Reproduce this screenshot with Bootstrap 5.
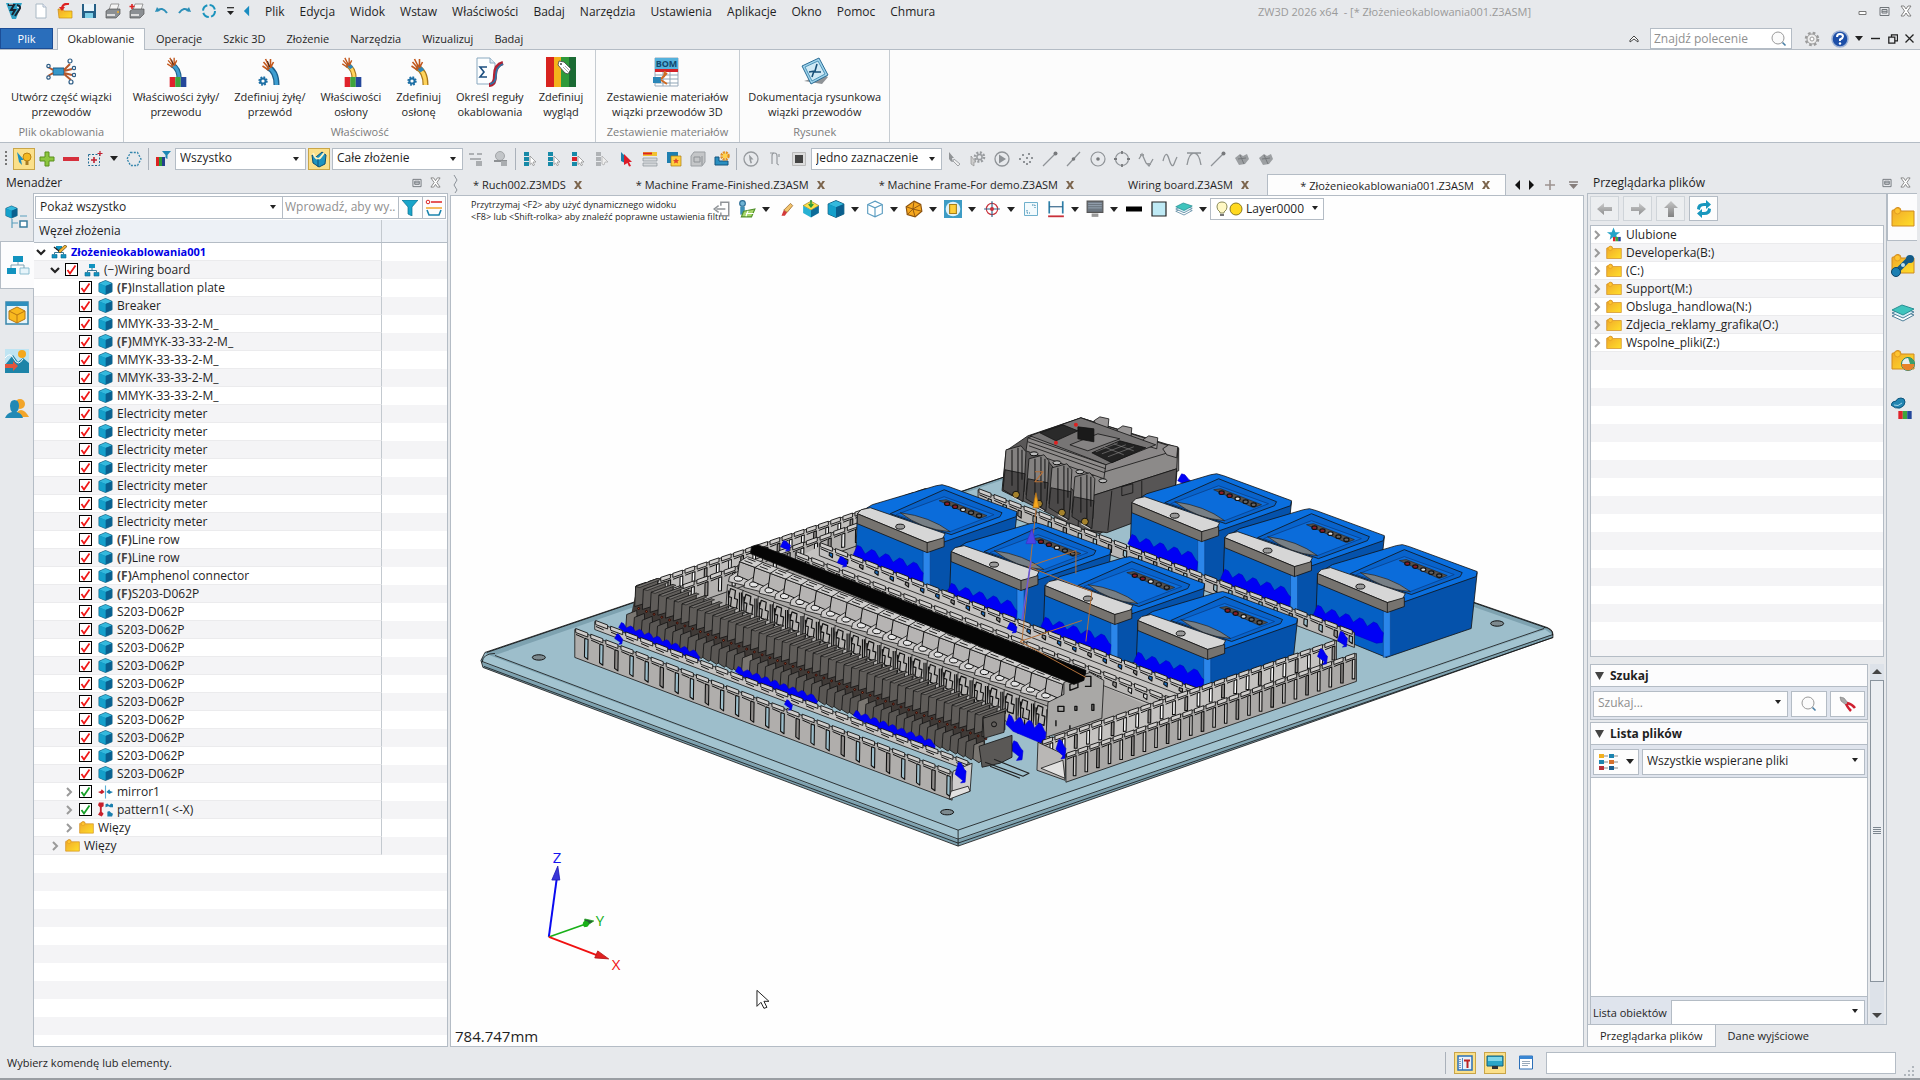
<!DOCTYPE html>
<html lang="pl">
<head>
<meta charset="utf-8">
<meta name="viewport" content="width=device-width, initial-scale=1">
<title>ZW3D 2026 x64 - [* Złożenieokablowania001.Z3ASM]</title>
<link href="https://cdn.jsdelivr.net/npm/bootstrap@5.3.0/dist/css/bootstrap.min.css" rel="stylesheet">
<style>
:root{--app:#e7e9ec;--line:#b4bcc5;--ink:#1f1f1f}
body{background:var(--app);color:var(--ink);font:11px/15px "Open Sans","Noto Sans",sans-serif;overflow:hidden}
a{color:inherit;text-decoration:none}
svg{display:block;flex:none}
button{font:inherit;color:inherit}
.tool{border:0;background:none;padding:0;display:flex;align-items:center;justify-content:center;flex:none}
.w25{width:25px}.w24{width:24px}.w22{width:22px}.w18{width:18px}.w14{width:14px}
.hot{background:#fbe08a;border:1px solid #c9a548;width:22px;height:22px}
.gap-hot{margin:0 2px}
.ic16{width:16px;height:16px}.ic18{width:18px;height:18px}.ic24{width:24px;height:24px}.ic30{width:30px;height:30px}
.vbar{width:1px;height:22px;background:#aab1ba;flex:none;margin:0 2px}
.titlebar{height:28px;padding:0 3px 6px 3px}
.menus{font-size:12px}
.menus a{padding:0 7px 0 8px}
.caption-txt{color:#9a9a9a;margin-right:320px}
.tabstrip{height:21px}
.tabstrip a{padding:3px 10px 0 11px}
.tabstrip .filetab{background:#2a6ebb;border:1px solid #1c4d96;color:#fff;width:53px;text-align:center;padding:2px 0 0}
.tabstrip .cur{background:#fdfdfd;border:1px solid var(--line);border-bottom:0;margin:0 0 -1px 4px;width:88px;text-align:center;position:relative;padding:2px 0 0;z-index:1}
.findbox{width:142px;height:21px;background:#fff;border:1px solid var(--line)}
.findbox input{border:0;background:none;width:112px;font-size:12px;padding:0 3px;color:var(--ink)}
input::placeholder{color:#8f8f8f!important;opacity:1}
.ribbon{height:94px;background:#fcfcfc;border-top:1px solid var(--line);border-bottom:1px solid var(--line)}
.rgroup{border-right:1px solid #c6ccd2;padding:7px 11px 0}
.rgroup.props{width:472px;padding:7px 8px 0 9px}
.rgroup.props .d-flex{gap:15px}
.rgroup .big{border:0;background:none;padding:0;text-align:center;white-space:nowrap}
.rgroup .big svg{margin:0 auto 2px}
.rgroup .cap{color:#7b7b7b;text-align:center;margin-top:5px}
.quick{height:31px;padding-left:3px}
.pick{appearance:none;border:1px solid var(--line);border-radius:0;height:22px;font-size:12px;line-height:15px;padding:0 16px 2px 4px;color:var(--ink);background:#fff url("data:image/svg+xml,%3csvg xmlns='http://www.w3.org/2000/svg' viewBox='0 0 6 4'%3e%3cpath d='M0 0h6L3 4z' fill='%23222'/%3e%3c/svg%3e") no-repeat right 6px top 8px/6px 4px;flex:none}
.pick.q{width:131px}
.sidehead{height:19px;padding:0 6px 2px 6px;font-size:12px}
.leftcol{width:450px}
.rail{width:33px}
.rail button{width:33px;height:48px;border:1px solid transparent;border-right:0;background:none;padding:0;display:flex;align-items:center;justify-content:center}
.rail .on{background:#fcfcfd;border-color:var(--line);margin-right:-1px;width:34px;position:relative}
.rail.right button{width:30px}
.panel-l{border:1px solid var(--line);margin-right:2px}
.filterrow{height:26px;padding:2px 1px 0}
.filterrow .pick{width:248px;height:23px}
.filterrow input{width:116px;height:23px;font-size:12px;border:1px solid var(--line);border-left:0;padding:0 2px 2px}
.sq{width:24px;height:23px;border:1px solid var(--line);border-left:0;background:#fdfdfd;padding:0;display:flex;align-items:center;justify-content:center}
.colhead{height:23px;background:#edf1f6;border-bottom:1px solid var(--line);font-size:12px;line-height:21px}
.colhead span{width:348px;border-right:1px solid #c3c9cf;padding-left:5px}
.stripes{background:repeating-linear-gradient(#fff 0 18px,#f4f4f6 18px 36px);font-size:12px;line-height:17px}
.trow{height:18px;width:348px;border-right:1px solid #c3c9cf;border-bottom:1px solid #ebebed;white-space:nowrap}
.trow label{cursor:default}
.chev{width:10px;height:10px;margin-right:5px}
.d1{padding-left:2px}.d2{padding-left:16px}.d3{padding-left:30px}.d4{padding-left:45px}
.tick{appearance:none;width:13px;height:13px;border:1px solid #000;background:#fff no-repeat center/11px 11px;margin:0 6px 0 0;flex:none}
.tick.red{background-image:url("data:image/svg+xml,%3csvg xmlns='http://www.w3.org/2000/svg' viewBox='0 0 11 11'%3e%3cpath d='M1.5 6L4 9.5 9.5 1.5' fill='none' stroke='%23f01818' stroke-width='1.8'/%3e%3c/svg%3e")}
.tick.green{background-image:url("data:image/svg+xml,%3csvg xmlns='http://www.w3.org/2000/svg' viewBox='0 0 11 11'%3e%3cpath d='M1.5 6L4 9.5 9.5 1.5' fill='none' stroke='%2318a028' stroke-width='1.8'/%3e%3c/svg%3e")}
.root-name{color:#0000e6;font-weight:700;font-size:11px}
.fixmark{font-weight:700;color:#444}
.doctabs{height:21px;padding-left:2px}
.doctabs .dt{padding:0 14px 0 39px;gap:7px;flex:none}
.doctabs .dt.first{padding-left:13px}
.doctabs .dt.on{background:#fdfdfd;border:1px solid var(--line);border-bottom:0;padding-left:32px}
.view{border:1px solid var(--line);background:#fefefe}
.hints{left:20px;top:3px;font-size:9px;line-height:12px}
.viewtools{left:258px;top:2px}
.layerbox{border:1px solid var(--line);width:114px;height:22px;background:#fff}
.layerbox .pick{border:0;width:80px;height:20px;padding-left:3px;padding-right:12px;background-position:right 5px top 7px}
.dist{left:4px;bottom:0;font-size:15px;line-height:20px}
.rightcol{width:336px;padding-left:3px}
.rp{border:1px solid var(--line);width:301px;padding:2px 2px 0}
.rp .nav4{gap:4px;height:26px}
.rp .nav4 button{width:29px;height:25px;border:1px solid #cfd4d9;background:#eceef0;display:flex;align-items:center;justify-content:center;padding:0}
.rp .nav4 .go{background:#fdfdfd;border-color:var(--line)}
.fbox{border:1px solid var(--line);height:432px;margin-top:3px;margin-bottom:7px;font-size:12px}
.fbox .trow{width:auto;border-right:0;padding-left:1px}
.fbox .chev{margin-right:4px}
.sec{border:1px solid var(--line);background:#dfe4ed}
.sec.upper{margin-bottom:2px}
.sec.lower{border-bottom:0}
.sech{height:22px;background:#fcfcfd;border-bottom:1px solid var(--line);font-weight:700;font-size:12px;line-height:21px;padding-left:4px;gap:6px}
.sec .line2{height:32px;padding:1px 2px 0;gap:3px}
.sec .ctl{height:26px;border:1px solid var(--line);background-color:#fdfdfd}
.muted-pick{color:#8f8f8f}
.objrow{padding:3px 2px 0;font-size:12px}
.objrow label{font-size:11px}
.objrow .pick{height:24px;border-bottom:0}
.filelist{background:#fefefe;border-top:1px solid var(--line);border-bottom:1px solid var(--line)}
.sbar{width:14px;background:#dde2e9;margin-left:2px}
.thumb{border:1px solid #8a949e;background:#ebeef2}
.bottabs{height:22px}
.bottabs a{padding:3px 12px}
.bottabs .on{background:#fdfdfd;border:1px solid var(--line);border-top:0}
.status{height:33px;padding-left:7px;border-bottom:2px solid #9a9ea3}
.status input{width:350px;height:22px;border:1px solid var(--line);background:#fff}
.fit{min-width:0;min-height:0}
</style>
</head>
<body class="vh-100 d-flex flex-column">

<svg width="0" height="0" class="position-absolute" aria-hidden="true">
<defs>
<linearGradient id="gy" x1="0" y1="0" x2="1" y2="1"><stop offset="0" stop-color="#f0a52a"/><stop offset="1" stop-color="#ffdf2a"/></linearGradient>
<linearGradient id="gg" x1="0" y1="0" x2="0" y2="1"><stop offset="0" stop-color="#bbb"/><stop offset="1" stop-color="#666"/></linearGradient>
<symbol id="cube" viewBox="0 0 16 16"><path d="M8 0.5l7 3v9l-7 3-7-3v-9z" fill="#0d86b5" stroke="#0a5678" stroke-width=".8"/><path d="M8 .8l6.600 2.800L8 6.500 1.400 3.600z" fill="#35b9dd"/><path d="M8 6.500l6.700-2.800v8.600L8 15.300z" fill="#0b5f8e"/><path d="M1.300 3.700L8 6.500v8.800l-6.700-2.900z" fill="#14a0cb"/></symbol>
<symbol id="cubeo" viewBox="0 0 16 16"><path d="M8 1l6.500 3v8L8 15l-6.500-3V4zM1.500 4L8 7l6.500-3M8 7v8" fill="#fff" stroke="#5a9cc0"/></symbol>
<symbol id="cubey" viewBox="0 0 16 16"><path d="M8 1l7 4-7 4-7-4z" fill="#ffe14a" stroke="#9a7a10" stroke-width=".6"/><path d="M1 5l7 4v6.500l-7-4z" fill="#27b1d3"/><path d="M15 5L8 9v6.500l7-4z" fill="#0d6c99"/><path d="M8 0v5M6 3.500l2 2.500 2-2.500" stroke="#2f9c39" fill="none" stroke-width="1.400"/></symbol>
<symbol id="fold" viewBox="0 0 24 20"><path d="M1 4q0-1 1-1h1q1-2.500 4-2.500T10 4h13v15H1z" fill="url(#gy)" stroke="#cf8a1e"/><circle cx="6.500" cy="4" r="3" fill="#ffc531" stroke="#d9901c" stroke-width=".7"/></symbol>
<symbol id="org" viewBox="0 0 16 14"><path d="M5 1h6v4H5z" fill="#1293bf"/><path d="M1 9.500h5V13H1zM10 9.500h5V13h-5z" fill="#1293bf" stroke="#0b6a90" stroke-width=".6"/><path d="M8 5v2.500M3.500 9.500v-2h9v2" fill="none" stroke="#3a7a98"/></symbol>
<symbol id="orgl" viewBox="0 0 24 22"><path d="M7 2h10v6H7z" fill="#1293bf"/><path d="M1 14h9v6H1z" fill="#1293bf"/><path d="M14 14h9v6h-9z" fill="#e6f4fa" stroke="#8bbdd0"/><path d="M12 8v3M5 14v-3h13v3" fill="none" stroke="#7ca2b3"/></symbol>
<symbol id="orge" viewBox="0 0 16 14"><use href="#org"/><path d="M7 6l7-6 2 1.500L9 8z" fill="#f2b233" stroke="#5a4010" stroke-width=".7"/><path d="M3 2l5 4" stroke="#222" stroke-width="1.500"/></symbol>
<symbol id="cr" viewBox="0 0 10 10"><path d="M3 1l4 4-4 4" fill="none" stroke="#9a9a9a" stroke-width="2"/></symbol>
<symbol id="cd" viewBox="0 0 10 10"><path d="M1 3l4 4 4-4" fill="none" stroke="#222" stroke-width="2.200"/></symbol>
<symbol id="dn" viewBox="0 0 8 5"><path d="M0 0h8L4 5z" fill="#222"/></symbol>
<symbol id="mir" viewBox="0 0 16 14"><path d="M8 0v14" stroke="#5bb0d6" stroke-width="1.200"/><path d="M0 7l3-1 1-2 3 3-3 2z" fill="#c7202c"/><path d="M16 7l-3-1-1-2-3 3 3 2z" fill="#1a7fae"/></symbol>
<symbol id="pat" viewBox="0 0 16 15"><path d="M1 0h5v4l-2 1v5l2 2-2 3-4-2 2-3V5L0 3z" fill="#c7202c"/><path d="M8 2l2-1 2 2 2-2 2 1v3h-3L11 4 8 5zM10 10l2-1 2 2 2 1-1 3h-5z" fill="#1a7fae"/></symbol>
<symbol id="pin" viewBox="0 0 11 11"><path d="M1 1.500h9v8H1zM3 3.500h5v3.500H3zM3 5.300h5" fill="none" stroke="#70757a"/></symbol>
<symbol id="cls" viewBox="0 0 12 12"><path d="M1 1h3l2 3 2-3h3L7.500 6 11 11H8L6 8l-2 3H1l3.500-5z" fill="#fff" stroke="#777" stroke-width=".9"/></symbol>
<symbol id="x" viewBox="0 0 10 10"><path d="M1 1h2.500L5 3.500 6.500 1H9L6.300 5 9 9H6.500L5 6.500 3.500 9H1l2.700-4z" fill="#7b644c"/></symbol>
<symbol id="mag" viewBox="0 0 16 16"><circle cx="7" cy="7" r="6" fill="#fbfbfb" stroke="#9a9a9a"/><path d="M11.500 11.500l3 3" stroke="#4a7fa5" stroke-width="1.600"/></symbol>
<symbol id="gear" viewBox="0 0 16 16"><circle cx="8" cy="8" r="6" fill="none" stroke="#9b9b9b" stroke-width="2.600" stroke-dasharray="2.600 2.110"/><circle cx="8" cy="8" r="5" fill="#eee" stroke="#9b9b9b"/><circle cx="8" cy="8" r="2" fill="#fff" stroke="#9b9b9b"/></symbol>
<symbol id="gearb" viewBox="0 0 10 10"><circle cx="5" cy="5" r="3.600" fill="none" stroke="#1d6fa5" stroke-width="2.200" stroke-dasharray="1.600 1.230"/><circle cx="5" cy="5" r="2.600" fill="none" stroke="#1d6fa5" stroke-width="2"/></symbol>
<symbol id="rgb" viewBox="0 0 15 9"><path d="M0 0h5v9H0z" fill="#e0232b"/><path d="M5 0h5v9H5z" fill="#3fa53c"/><path d="M10 0h5v9h-5z" fill="#24479b"/></symbol>
<symbol id="wire" viewBox="0 0 18 28"><path d="M5 9Q14 13 14 27" fill="none" stroke="#1c5f8c" stroke-width="6"/><path d="M5 9Q14 13 14 27" fill="none" stroke="#3f9ed0" stroke-width="3.500"/><path d="M7 11L1 4M7 9L3 1M8 9L8 1M6 12L0 8M8 10L11 4" stroke="#c2571c" stroke-width="1.600"/><path d="M7 9L5 3" stroke="#3a2015"/></symbol>
<symbol id="wirey" viewBox="0 0 18 28"><path d="M5 9Q14 13 14 27" fill="none" stroke="#a9781c" stroke-width="6"/><path d="M5 9Q14 13 14 27" fill="none" stroke="#ffd45c" stroke-width="3.500"/><path d="M5 9q4 1 6 4" fill="none" stroke="#2d86b8" stroke-width="4.500"/><path d="M7 11L1 4M7 9L3 1M8 9L8 1M6 12L0 8M8 10L11 4" stroke="#c2571c" stroke-width="1.600"/></symbol>
<symbol id="r1" viewBox="0 0 30 30"><path d="M7 11h11v7H7z" fill="#3597c9" stroke="#1b5b86"/><path d="M7 13l-5-3M7 16l-5 3M18 13l6-6M18 14l8-2M18 16l8 2M18 17l7 6" stroke="#b5582c" stroke-width="2"/><g fill="#fff" stroke="#2e5d86" stroke-width="1.200"><circle cx="2.500" cy="9" r="1.700"/><circle cx="2.500" cy="20.500" r="1.700"/><circle cx="24" cy="4" r="2"/><circle cx="28" cy="11" r="1.700"/><circle cx="28" cy="18" r="1.700"/><circle cx="25" cy="25" r="2"/></g></symbol>
<symbol id="r2" viewBox="0 0 30 30"><use href="#wire" x="5" y="0" width="18" height="24"/><path d="M8 20h18v10H8z" fill="#fcfcfc"/><use href="#rgb" x="8" y="20" width="18" height="10"/></symbol>
<symbol id="r3" viewBox="0 0 30 30"><use href="#wire" x="7" y="1" width="19" height="28"/><use href="#gearb" x="3" y="19" width="10" height="10"/></symbol>
<symbol id="r4" viewBox="0 0 30 30"><use href="#wirey" x="5" y="0" width="18" height="24"/><path d="M8 20h18v10H8z" fill="#fcfcfc"/><use href="#rgb" x="8" y="20" width="18" height="10"/></symbol>
<symbol id="r5" viewBox="0 0 30 30"><use href="#wirey" x="7" y="1" width="19" height="28"/><use href="#gearb" x="3" y="19" width="10" height="10"/></symbol>
<symbol id="r6" viewBox="0 0 30 30"><path d="M2 1h13l5 5v21H2z" fill="#fdfeff" stroke="#8aa9c0"/><path d="M15 1v5h5" fill="#dce8f2" stroke="#8aa9c0"/><path d="M12 10H5l4 5-4 5h7" fill="none" stroke="#1d4f80" stroke-width="1.600"/><path d="M14 28q6 0 6-10t8-12" fill="none" stroke="#b22233" stroke-width="4"/><path d="M15 27q6-1 6-9t7-11" fill="none" stroke="#2c76a8" stroke-width="1.800"/></symbol>
<symbol id="r7" viewBox="0 0 30 30"><path d="M0 0h8v30H0z" fill="#d8231f"/><path d="M8 0h7v30H8z" fill="#f4b21c"/><path d="M15 0h8v30h-8z" fill="#2f9a3a"/><path d="M23 0h7v30h-7z" fill="#1b6b34"/><path d="M13 4l5 1 7 7-3 5-3-1-7-8z" fill="#fff" stroke="#444" stroke-width=".8"/><circle cx="15" cy="7" r="1" fill="#444"/><path d="M17 10l5 5M19 9l4 4" stroke="#888" stroke-width=".7"/></symbol>
<symbol id="r8" viewBox="0 0 30 30"><path d="M3 1h23v28H3z" fill="#fff" stroke="#9ab"/><path d="M3 1h23v11H3z" fill="#54b1dc"/><text x="14.500" y="10" text-anchor="middle" font-family="Open Sans, sans-serif" font-size="9" font-weight="700" fill="#11486e">BOM</text><path d="M3 12h23v3H3z" fill="#d4232a"/><path d="M3 18h23M3 22h23M3 26h23M11 15v14M18 15v14" stroke="#8fa5b6"/><path d="M1 20h8v6H1z" fill="#2a86b8"/><path d="M9 22l6-6M9 23l6 4M12 20l1-6" stroke="#d06a24" stroke-width="2"/></symbol>
<symbol id="r9" viewBox="0 0 30 30"><path d="M4 24l18 3 6-7-4-2z" fill="#8f9397"/><path d="M2 9l17-8 9 17-17 9z" fill="#9fd4ec" stroke="#2a6c95"/><path d="M5 10l13-6 7 13-13 7z" fill="#cfe9f5" stroke="#4d93b8"/><path d="M9 15l6-1 2-7M14 14l-2 6M14 15l7 0" stroke="#174f78" stroke-width="1.600" fill="none"/></symbol>
<symbol id="sel" viewBox="0 0 16 16"><path d="M2 1h5v4H2zM2 6h5v4H2zM2 11h5v4H2z" fill="#178aa8"/><path d="M8 5l6 6-3 0 1.500 3-1.500.6L9.700 12 8 13.500z" fill="#fff" stroke="#888" stroke-width=".7"/></symbol>
<symbol id="selr" viewBox="0 0 16 16"><use href="#sel"/><path d="M2 6h5v4H2z" fill="#d8232b"/></symbol>
<symbol id="selg" viewBox="0 0 16 16"><path d="M2 1h5v4H2zM2 6h5v4H2zM2 11h5v4H2z" fill="#b0b3b6"/><path d="M8 5l6 6-3 0-1 3-2-1z" fill="#eee" stroke="#aaa" stroke-width=".7"/></symbol>
<symbol id="arr2" viewBox="0 0 16 16"><path d="M3 1l6 6-3 1 1 4-4-2z" fill="#1b7fa8"/><path d="M6 3l8 8H11l2 4-2 .6L9.500 12 6 14z" fill="#dd1d28"/></symbol>
<symbol id="lst" viewBox="0 0 16 16"><path d="M1 1h14v4H1z" fill="#f1c232"/><path d="M1 2.500h9" stroke="#d22" stroke-width="2"/><path d="M1 7h14v3H1zM1 12h14v3H1z" fill="#d5d8db" stroke="#8b9299" stroke-width=".7"/></symbol>
<symbol id="bxs" viewBox="0 0 16 16"><path d="M1 1h11v11H1z" fill="#1f7fb0"/><path d="M5 5h10v10H5z" fill="#ffcf3f" stroke="#a97b12" stroke-width=".7"/><path d="M10 7l1 2h2l-1.500 1.500.5 2-2-1-2 1 .5-2L7 9h2z" fill="#e0462b"/></symbol>
<symbol id="bxg" viewBox="0 0 16 16"><path d="M4 1h11v10l-3 4H1V5z" fill="#c4c6c8" stroke="#9b9fa3"/><path d="M4 6h6v5H4zM12 5v9" fill="none" stroke="#8e9296"/></symbol>
<symbol id="bxw" viewBox="0 0 16 16"><path d="M1 6h4v4h9v4H1z" fill="#2a8fc0" stroke="#14557e"/><circle cx="11" cy="5" r="3.500" fill="none" stroke="#e5901c" stroke-width="2.500" stroke-dasharray="2 .8"/><circle cx="11" cy="5" r="2.400" fill="#ffd34a"/></symbol>
<symbol id="gc" viewBox="0 0 16 16"><circle cx="8" cy="8" r="7" fill="none" stroke="#969a9e" stroke-width="1.300"/><path d="M6 3.500l4.500 5H8l1 3.500-1.500.5L6.500 9z" fill="#969a9e"/></symbol>
<symbol id="gn" viewBox="0 0 16 16"><path d="M5 13V5q0-3 2.500-3T10 5v8M12 3v3" fill="none" stroke="#969a9e" stroke-width="1.200"/><path d="M3 2h4M10 13l2 1" stroke="#969a9e"/></symbol>
<symbol id="sqd" viewBox="0 0 16 16"><path d="M1.500 1.500h13v13h-13z" fill="#ddd" stroke="#bbb"/><path d="M4 4h8v8H4z" fill="#444"/></symbol>
<symbol id="g1" viewBox="0 0 16 16"><path d="M3 1l5 6H6l1 4-2-.5L3 8z" fill="#909396"/><path d="M8 8l6 5-2 2-5-5z" fill="#eee" stroke="#8e9296" stroke-width=".8"/></symbol>
<symbol id="g2" viewBox="0 0 16 16"><circle cx="9.500" cy="6" r="4.500" fill="none" stroke="#9a9da0" stroke-width="2.600" stroke-dasharray="2 1.500"/><circle cx="9.500" cy="6" r="2.600" fill="none" stroke="#9a9da0" stroke-width="1.500"/><path d="M1 5l5 6-2 0 0 4-3-2z" fill="#ccc" stroke="#888" stroke-width=".6"/></symbol>
<symbol id="g3" viewBox="0 0 16 16"><circle cx="8" cy="8" r="7" fill="none" stroke="#8f9397" stroke-width="1.300"/><path d="M5 3.500L12 8l-7 4.500z" fill="#8d9195"/></symbol>
<symbol id="g4" viewBox="0 0 16 16"><path d="M1 8h2M4 4h2M5 11h2M8 7h2M10 3h2M11 11h2M13 7h2M8 13h2" stroke="#8f9397" stroke-width="2"/></symbol>
<symbol id="g5" viewBox="0 0 16 16"><path d="M1 15L14 2" stroke="#8f9397" stroke-width="1.300"/><circle cx="13.500" cy="2.500" r="2" fill="#77797c"/></symbol>
<symbol id="g6" viewBox="0 0 16 16"><path d="M1 15L14 1" stroke="#8f9397" stroke-width="1.300"/><circle cx="7.500" cy="8" r="1.800" fill="#77797c"/></symbol>
<symbol id="g7" viewBox="0 0 16 16"><circle cx="8" cy="8" r="7" fill="none" stroke="#8f9397" stroke-width="1.200"/><circle cx="8" cy="8" r="1.800" fill="#77797c"/></symbol>
<symbol id="g8" viewBox="0 0 16 16"><circle cx="8" cy="8" r="6.500" fill="none" stroke="#8f9397" stroke-width="1.200"/><path d="M8 0v3M8 13v3M0 8h3M13 8h3" stroke="#77797c" stroke-width="1.800"/></symbol>
<symbol id="g9" viewBox="0 0 16 16"><path d="M1 10Q4-2 7 8t5 5 3-7" fill="none" stroke="#8f9397" stroke-width="1.300"/></symbol>
<symbol id="g9b" viewBox="0 0 16 16"><path d="M1 8l3-5 4 9 3 3 4-7" fill="none" stroke="#8f9397" stroke-width="1.300"/><path d="M2 3h4v2H2zM9 12h4v2H9z" fill="#9a9da0"/></symbol>
<symbol id="g10" viewBox="0 0 16 16"><path d="M1 14Q3 2 8 2t7 12M1 2h14" fill="none" stroke="#8f9397" stroke-width="1.300"/></symbol>
<symbol id="g11" viewBox="0 0 16 16"><path d="M1 7l5-4 3 2 4-2 2 5-4 5-6 1z" fill="#9c9fa2"/><path d="M4 8l8-1M6 4l4 9" stroke="#76797c"/></symbol>
<symbol id="lay" viewBox="0 0 24 20"><path d="M1 13l11-5 11 4-11 6z" fill="#fff" stroke="#4d7f99"/><path d="M1 10l11-5 11 4-11 6z" fill="#d9eef5" stroke="#4d7f99"/><path d="M1 7l10-5 12 4-11 6z" fill="#3fc4bd" stroke="#2a8f94"/></symbol>
<symbol id="ref" viewBox="0 0 18 18"><path d="M2 9q0-6 7-6h2V0l5 4.500L11 9V6H9Q5 6 5 10z" fill="#1796bd"/><path d="M16 9q0 6-7 6H7v3l-5-4.500L7 9v3h2q4 0 4-4z" fill="#1796bd"/></symbol>
</defs>
</svg>

<header>
  <div class="titlebar d-flex align-items-center">
    <button class="tool w22" aria-label="ZW3D"><svg class="ic18" viewBox="0 0 18 18"><path d="M1 1h16l-6 16H7z" fill="#2fa1c4"/><path d="M3 3h6l-3 5h4l-3 5M12 3q5 1 2 5l-4 6" stroke="#1b2430" stroke-width="2" fill="none"/><path d="M4 2h4M12 5l2 1" stroke="#fff"/></svg></button>
    <button class="tool w24 ms-1" aria-label="Nowy"><svg class="ic16" viewBox="0 0 16 16"><path d="M3 1h7l3 3v11H3z" fill="#fff" stroke="#a9b8c4"/><path d="M10 1v3h3" fill="#eef" stroke="#a9b8c4"/></svg></button>
    <button class="tool w24" aria-label="Otwórz"><svg class="ic16" viewBox="0 0 16 16"><path d="M1 6h5l1 2h8v7H2z" fill="url(#gy)" stroke="#c88a14" stroke-width=".7"/><path d="M12 1Q6 0 5 5" stroke="#d22" stroke-width="2.200" fill="none"/><path d="M2 4h6L5 8z" fill="#d22"/></svg></button>
    <button class="tool w24" aria-label="Zapisz"><svg class="ic16" viewBox="0 0 16 16"><path d="M1 1h14v14H1z" fill="#245f86"/><path d="M3 1h10v7H3z" fill="#e9f4fa"/><path d="M4 10h8v5H4z" fill="#7fd0e8"/></svg></button>
    <button class="tool w24" aria-label="Drukuj"><svg class="ic16" viewBox="0 0 16 16"><path d="M6 1h8l-2 6H4z" fill="#f5f5f5" stroke="#777" stroke-width=".7"/><path d="M1 8l3-2h11v5l-4 4H1z" fill="#8b8f93" stroke="#555" stroke-width=".7"/><path d="M2 12h8" stroke="#ddd" stroke-width="2"/><path d="M12 9h2" stroke="#f0b030" stroke-width="1.500"/></svg></button>
    <button class="tool w24" aria-label="Drukuj 3D"><svg class="ic16" viewBox="0 0 16 16"><path d="M6 1h8l-2 6H4z" fill="#f5f5f5" stroke="#777" stroke-width=".7"/><path d="M1 8l3-2h11v5l-4 4H1z" fill="#8b8f93" stroke="#555" stroke-width=".7"/><path d="M2 12h8" stroke="#ddd" stroke-width="2"/><path d="M3 1v5M.5 3.500h5" stroke="#d22" stroke-width="1.600"/></svg></button>
    <button class="tool w24" aria-label="Cofnij"><svg class="ic16" viewBox="0 0 16 16"><path d="M4 8q5-5 10 2" stroke="#2c8fb8" stroke-width="2" fill="none"/><path d="M2 9l2-5 3 4z" fill="#2c8fb8"/></svg></button>
    <button class="tool w24" aria-label="Ponów"><svg class="ic16" viewBox="0 0 16 16"><path d="M12 8Q7 3 2 10" stroke="#2c8fb8" stroke-width="2" fill="none"/><path d="M14 9l-2-5-3 4z" fill="#2c8fb8"/></svg></button>
    <button class="tool w24" aria-label="Odśwież"><svg class="ic16" viewBox="0 0 16 16"><circle cx="8" cy="8" r="6" fill="none" stroke="#1b93bd" stroke-width="2" stroke-dasharray="7 2.400"/></svg></button>
    <button class="tool w18" aria-label="Dostosuj"><svg width="7" height="8" viewBox="0 0 7 8"><path d="M0 .7h7" stroke="#222" stroke-width="1.200"/><path d="M0 4h7L3.500 8z" fill="#222"/></svg></button>
    <button class="tool w14 me-1" aria-label="Zwiń"><svg width="7" height="12" viewBox="0 0 8 12"><path d="M7 0v12L1 6z" fill="#1a8cc0"/></svg></button>
    <nav class="menus d-flex text-nowrap">
      <a href="#">Plik</a><a href="#">Edycja</a><a href="#">Widok</a><a href="#">Wstaw</a><a href="#">Właściwości</a><a href="#">Badaj</a><a href="#">Narzędzia</a><a href="#">Ustawienia</a><a href="#">Aplikacje</a><a href="#">Okno</a><a href="#">Pomoc</a><a href="#">Chmura</a>
    </nav>
    <span class="caption-txt ms-auto text-nowrap">ZW3D 2026 x64&nbsp; - [* Złożenieokablowania001.Z3ASM]</span>
    <div class="d-flex align-items-center">
      <button class="tool w22" aria-label="Minimalizuj"><svg width="9" height="10" viewBox="0 0 9 10"><path d="M1 5.500h7v3H1z" fill="#fff" stroke="#777"/></svg></button>
      <button class="tool w22" aria-label="Przywróć"><svg width="11" height="11"><use href="#pin"/></svg></button>
      <button class="tool w22" aria-label="Zamknij"><svg width="12" height="12"><use href="#cls"/></svg></button>
    </div>
  </div>

  <div class="tabstrip d-flex text-nowrap">
    <a class="filetab" href="#">Plik</a><a class="cur" href="#">Okablowanie</a><a href="#">Operacje</a><a href="#">Szkic 3D</a><a href="#">Złożenie</a><a href="#">Narzędzia</a><a href="#">Wizualizuj</a><a href="#">Badaj</a>
    <div class="ms-auto d-flex align-items-center pe-1">
      <button class="tool w24 me-1" aria-label="Zwiń wstążkę"><svg width="10" height="9" viewBox="0 0 10 9"><path d="M1 6l4-4 4 4v2L5 5 1 8z" fill="#fff" stroke="#444"/></svg></button>
      <div class="findbox d-flex align-items-center justify-content-between pe-1"><input type="text" placeholder="Znajdź polecenie" aria-label="Znajdź polecenie"><svg class="ic16"><use href="#mag"/></svg></div>
      <button class="tool w24 ms-2 me-1" aria-label="Ustawienia"><svg class="ic16"><use href="#gear"/></svg></button>
      <button class="tool w24" aria-label="Pomoc"><svg class="ic18" viewBox="0 0 18 18"><circle cx="9" cy="9" r="8" fill="#1d4fa8" stroke="#9fb3d6" stroke-width="1.500"/><path d="M6 7q0-3 3-3t3 2.500Q12 8 9 9.500V11" fill="none" stroke="#fff" stroke-width="2"/><circle cx="9" cy="13.500" r="1.200" fill="#fff"/></svg></button>
      <button class="tool w14" aria-label="Więcej"><svg width="8" height="5"><use href="#dn"/></svg></button>
      <button class="tool w18" aria-label="Minimalizuj okno"><svg width="9" height="9" viewBox="0 0 9 9"><path d="M0 4.500h9" stroke="#222" stroke-width="1.400"/></svg></button>
      <button class="tool w18" aria-label="Przywróć okno"><svg width="10" height="10" viewBox="0 0 10 10"><path d="M3.500 3V.8h6v6H7.200M.8 3.200h6v6h-6z" fill="none" stroke="#222" stroke-width="1.300"/></svg></button>
      <button class="tool w14" aria-label="Zamknij okno"><svg width="9" height="9" viewBox="0 0 9 9"><path d="M.5.5l8 8M8.500.5l-8 8" stroke="#222" stroke-width="1.300"/></svg></button>
    </div>
  </div>

  <div class="ribbon d-flex">
    <section class="rgroup"><div class="d-flex"><button class="big"><svg class="ic30"><use href="#r1"/></svg>Utwórz część wiązki<br>przewodów</button></div><div class="cap">Plik okablowania</div></section>
    <section class="rgroup props"><div class="d-flex">
      <button class="big"><svg class="ic30"><use href="#r2"/></svg>Właściwości żyły/<br>przewodu</button>
      <button class="big"><svg class="ic30"><use href="#r3"/></svg>Zdefiniuj żyłę/<br>przewód</button>
      <button class="big"><svg class="ic30"><use href="#r4"/></svg>Właściwości<br>osłony</button>
      <button class="big"><svg class="ic30"><use href="#r5"/></svg>Zdefiniuj<br>osłonę</button>
      <button class="big"><svg class="ic30"><use href="#r6"/></svg>Określ reguły<br>okablowania</button>
      <button class="big"><svg class="ic30"><use href="#r7"/></svg>Zdefiniuj<br>wygląd</button></div><div class="cap">Właściwość</div></section>
    <section class="rgroup"><div class="d-flex justify-content-center"><button class="big"><svg class="ic30"><use href="#r8"/></svg>Zestawienie materiałów<br>wiązki przewodów 3D</button></div><div class="cap">Zestawienie materiałów</div></section>
    <section class="rgroup px-2"><div class="d-flex justify-content-center"><button class="big"><svg class="ic30"><use href="#r9"/></svg>Dokumentacja rysunkowa<br>wiązki przewodów</button></div><div class="cap">Rysunek</div></section>
  </div>

  <div class="quick d-flex align-items-center">
    <svg width="10" height="16" viewBox="0 0 10 16"><path d="M2 1h2M2 5h2M2 9h2M2 13h2" stroke="#777" stroke-width="2"/></svg>
    <button class="tool hot" aria-label="Wybór"><svg class="ic18" viewBox="0 0 18 18"><path d="M2 2l7 8H6l1 5-3-3z" fill="#1d8fc0"/><circle cx="12" cy="7" r="4" fill="#f4b921" stroke="#b98212"/><path d="M10.500 11h3v4h-3z" fill="#a87c22"/></svg></button>
    <button class="tool w24" aria-label="Dodaj"><svg class="ic16" viewBox="0 0 16 16"><path d="M6 1h4v5h5v4h-5v5H6v-5H1V6h5z" fill="#8cc63f" stroke="#5a8f1c"/></svg></button>
    <button class="tool w24" aria-label="Usuń"><svg class="ic16" viewBox="0 0 16 16"><path d="M0 6h16v4H0z" fill="#d6303c"/></svg></button>
    <button class="tool w24" aria-label="Ramka"><svg class="ic16" viewBox="0 0 16 16"><path d="M1.500 3.500h11v11h-11z" fill="none" stroke="#246c94" stroke-dasharray="2 1.500"/><path d="M7 6v6M4 9h6" stroke="#c02030" stroke-width="1.600"/><path d="M13 0v5M10.500 2.500h5" stroke="#c02030" stroke-width="1.200"/></svg></button>
    <button class="tool w14" aria-label="Więcej"><svg width="8" height="5"><use href="#dn"/></svg></button>
    <button class="tool w25" aria-label="Wielokąt"><svg class="ic16" viewBox="0 0 16 16"><path d="M4.500 1.500h7L15 8l-3.500 6.500h-7L1 8z" fill="none" stroke="#3184ab" stroke-width="1.300" stroke-dasharray="2 1.300"/></svg></button>
    <span class="vbar"></span>
    <label class="tool w24" for="f1" aria-label="Filtr"><svg class="ic16" viewBox="0 0 16 16"><path d="M1 6h3v9H1z" fill="#d22"/><path d="M4 6h3v9H4z" fill="#2b9a3a"/><path d="M7 6h3v9H7z" fill="#233f8c"/><path d="M7 0h9l-3.500 4v4l-2-1V4z" fill="#1c87b5"/></svg></label>
    <select class="pick q" id="f1"><option>Wszystko</option></select>
    <button class="tool hot gap-hot" aria-label="Złożenie"><svg class="ic18" viewBox="0 0 18 18"><path d="M2 5l4 2 6-5 4 3-1 9-6 3-6-4z" fill="#1f94bf" stroke="#0d4f74"/><path d="M3 3q3 8 7 5l4-5" stroke="#fff4c0" stroke-width="2" fill="none"/><path d="M8 9v8" stroke="#0d4f74"/></svg></button>
    <select class="pick q" aria-label="Zakres"><option>Całe złożenie</option></select>
    <span id="midtools" class="d-flex align-items-center"></span>
    <select class="pick q" aria-label="Tryb zaznaczania"><option>Jedno zaznaczenie</option></select>
    <span id="graytools" class="d-flex align-items-center"></span>
  </div>
</header>

<main class="flex-fill d-flex fit">
  <aside class="leftcol d-flex flex-column flex-shrink-0">
    <div class="sidehead d-flex align-items-center"><span>Menadżer</span><button class="tool ms-auto w18" aria-label="Przypnij"><svg width="10" height="10"><use href="#pin"/></svg></button><button class="tool w18" aria-label="Zamknij"><svg width="11" height="11"><use href="#cls"/></svg></button></div>
    <div class="flex-fill d-flex fit">
      <nav class="rail flex-shrink-0">
        <button aria-label="Historia"><svg class="ic24" viewBox="0 0 24 24"><use href="#cube" x="0" y="0" width="13" height="14"/><path d="M15 11h7M7 14v9M7 18h6" stroke="#5b9fbd" stroke-width="1.200"/><path d="M15 16h7v6h-7z" fill="#fff" stroke="#3b7e9e" stroke-width="1.500"/></svg></button>
        <button class="on" aria-label="Złożenie"><svg width="24" height="22"><use href="#orgl"/></svg></button>
        <button aria-label="Widoki"><svg class="ic24" viewBox="0 0 24 24"><path d="M1 1h22v22H1z" fill="#e5f3f9" stroke="#3a86ab" stroke-width="1.500"/><path d="M1 1h22v4H1z" fill="#2d8fbd"/><path d="M12 6l8 4v8l-8 4-8-4v-8z" fill="#f9b91e" stroke="#b97812"/><path d="M4 10l8 4 8-4M12 14v8" fill="none" stroke="#b97812"/></svg></button>
        <button aria-label="Wizualizacja"><svg class="ic24" viewBox="0 0 24 24"><path d="M0 0h24v24H0z" fill="#bfe4f2"/><path d="M0 16L8 6l5 7 5-4 6 5v10H0z" fill="#1d84a8"/><path d="M0 9q5-7 9 1t9 0" stroke="#fff" fill="none"/><circle cx="17" cy="5" r="4" fill="#f5a81c"/><path d="M0 15h8v-3l5 5-5 5v-3H0z" fill="#e2553c"/></svg></button>
        <button aria-label="Role"><svg class="ic24" viewBox="0 0 24 24"><circle cx="15" cy="7" r="5" fill="#f2a52a"/><path d="M10 20q2-7 6-7t8 7z" fill="#f2a52a"/><path d="M5 9q0-6 4.500-6T14 9q0 4-2.500 6 5 1 6.500 6H0q2-5 7-6-2-2-2-6z" fill="#2089b5"/></svg></button>
      </nav>
      <div class="panel-l flex-fill bg-white overflow-hidden d-flex flex-column">
        <div class="filterrow d-flex flex-shrink-0"><select class="pick" aria-label="Pokaż"><option>Pokaż wszystko</option></select><input type="text" placeholder="Wprowadź, aby wy..." aria-label="Wyszukaj w drzewie"><button class="sq" aria-label="Filtr"><svg class="ic16" viewBox="0 0 16 16"><path d="M0 0h16l-6 7v9l-4-2V7z" fill="#1aa5c9" stroke="#0c6f8e" stroke-width=".7"/></svg></button><button class="sq" aria-label="Opcje"><svg class="ic18" viewBox="0 0 18 18"><circle cx="3" cy="3" r="1.800" fill="none" stroke="#d22"/><path d="M6 3h11" stroke="#d22" stroke-width="1.500"/><path d="M1 9h16" stroke="#f2a52a" stroke-width="1.500"/><path d="M2 11l2 5h10l2-5" fill="none" stroke="#1a84ad" stroke-width="1.600"/></svg></button></div>
        <div class="colhead d-flex flex-shrink-0"><span>Węzeł złożenia</span></div>
        <div class="stripes flex-fill" id="tree"></div>
      </div>
    </div>
  </aside>

  <section class="flex-fill d-flex flex-column fit">
    <div class="doctabs d-flex text-nowrap flex-shrink-0">
      <svg width="8" height="20" viewBox="0 0 8 20"><path d="M2 1l3 5-3 5 3 5-2 3" fill="none" stroke="#8d939a"/></svg>
      <a href="#" class="dt first d-flex align-items-center">* Ruch002.Z3MDS <svg width="10" height="10"><use href="#x"/></svg></a>
      <a href="#" class="dt d-flex align-items-center">* Machine Frame-Finished.Z3ASM <svg width="10" height="10"><use href="#x"/></svg></a>
      <a href="#" class="dt d-flex align-items-center">* Machine Frame-For demo.Z3ASM <svg width="10" height="10"><use href="#x"/></svg></a>
      <a href="#" class="dt d-flex align-items-center">Wiring board.Z3ASM <svg width="10" height="10"><use href="#x"/></svg></a>
      <a href="#" class="dt on d-flex align-items-center ms-auto">* Złożenieokablowania001.Z3ASM <svg width="10" height="10"><use href="#x"/></svg></a>
      <button class="tool w14 ms-1" aria-label="Poprzednia"><svg width="5" height="10" viewBox="0 0 5 10"><path d="M5 0v10L0 5z" fill="#111"/></svg></button>
      <button class="tool w14" aria-label="Następna"><svg width="5" height="10" viewBox="0 0 5 10"><path d="M0 0v10l5-5z" fill="#111"/></svg></button>
      <button class="tool w24" aria-label="Nowa karta"><svg width="10" height="10" viewBox="0 0 10 10"><path d="M5 0v10M0 5h10" stroke="#9d9390" stroke-width="1.600"/></svg></button>
      <button class="tool w22" aria-label="Lista kart"><svg width="9" height="8" viewBox="0 0 9 8"><path d="M0 1h9" stroke="#867e7c" stroke-width="1.500"/><path d="M0 3h9L4.500 8z" fill="#867e7c"/></svg></button>
    </div>
    <div class="view flex-fill position-relative overflow-hidden">
      <svg id="scene" class="w-100 h-100" viewBox="450 195 1134 851" stroke-linejoin="round"></svg>
      <div class="hints position-absolute text-nowrap">Przytrzymaj &lt;F2&gt; aby użyć dynamicznego widoku<br>&lt;F8&gt; lub &lt;Shift-rolka&gt; aby znaleźć poprawne ustawienia filtru.</div>
      <div class="viewtools position-absolute d-flex align-items-center">
        <span id="vtools" class="d-flex align-items-center"></span>
        <div class="layerbox d-flex align-items-center"><svg width="14" height="16" viewBox="0 0 14 16" class="ms-1"><path d="M7 1q5 0 5 5 0 3-3 5v1H5v-1Q2 9 2 6q0-5 5-5z" fill="#fff8c4" stroke="#8b8b5a"/><path d="M5 13h4v2H5z" fill="#777"/></svg><svg width="14" height="14" viewBox="0 0 14 14"><circle cx="7" cy="7" r="6" fill="#ffd91f" stroke="#8a7a20"/></svg><select class="pick" aria-label="Warstwa"><option>Layer0000</option></select></div>
      </div>
      <div class="dist position-absolute">784.747mm</div>
    </div>
  </section>

  <aside class="rightcol d-flex flex-column flex-shrink-0">
    <div class="sidehead d-flex align-items-center"><span>Przeglądarka plików</span><button class="tool ms-auto w18" aria-label="Przypnij"><svg width="10" height="10"><use href="#pin"/></svg></button><button class="tool w18" aria-label="Zamknij"><svg width="11" height="11"><use href="#cls"/></svg></button></div>
    <div class="flex-fill d-flex fit">
      <div class="rp d-flex flex-column">
        <div class="nav4 d-flex flex-shrink-0">
          <button aria-label="Wstecz"><svg class="ic16" viewBox="0 0 16 16"><path d="M0 8l7-6v4h8v4H7v4z" fill="url(#gg)" opacity=".7"/></svg></button>
          <button aria-label="Dalej"><svg class="ic16" viewBox="0 0 16 16"><path d="M16 8L9 2v4H1v4h8v4z" fill="url(#gg)" opacity=".7"/></svg></button>
          <button aria-label="W górę"><svg class="ic16" viewBox="0 0 16 16"><path d="M8 0l7 7h-4v9H5V7H1z" fill="url(#gg)" opacity=".8"/></svg></button>
          <button class="go" aria-label="Odśwież"><svg class="ic18"><use href="#ref"/></svg></button>
        </div>
        <div class="fbox stripes flex-shrink-0" id="drives"></div>
        <div class="d-flex flex-fill fit">
          <div class="d-flex flex-column flex-fill">
            <div class="sec upper">
              <div class="sech d-flex align-items-center"><svg width="9" height="8" viewBox="0 0 9 8"><path d="M0 0h9L4.500 8z" fill="#444"/></svg>Szukaj</div>
              <div class="line2 d-flex align-items-center"><select class="pick ctl flex-fill muted-pick" aria-label="Szukaj"><option>Szukaj...</option></select><button class="ctl px-2" aria-label="Szukaj pliku"><svg width="18" height="16"><use href="#mag"/></svg></button><button class="ctl px-2" aria-label="Narzędzia"><svg width="17" height="16" viewBox="0 0 17 16"><path d="M1 1l4 1 4 5-2 2-5-4z" fill="#aaa" stroke="#777" stroke-width=".6"/><path d="M8 7q5 1 8 5M7 8q2 4 5 7" fill="none" stroke="#cf2030" stroke-width="2.600"/></svg></button></div>
            </div>
            <div class="sec lower flex-fill d-flex flex-column">
              <div class="sech d-flex align-items-center"><svg width="9" height="8" viewBox="0 0 9 8"><path d="M0 0h9L4.500 8z" fill="#444"/></svg>Lista plików</div>
              <div class="line2 d-flex align-items-center"><button class="ctl d-flex align-items-center gap-2 px-1" aria-label="Widok listy"><svg width="20" height="18" viewBox="0 0 20 18"><path d="M1 1h5v4H1z" fill="#f2b01e"/><path d="M11 1h5v4h-5zM1 7h5v4H1z" fill="#1c84b0"/><path d="M11 7h5v4h-5z" fill="#d8702a"/><path d="M1 13h5v4H1z" fill="#b8303a"/><path d="M11 13h5v4h-5z" fill="#1c5f90"/><path d="M6 3h4M16 3h4M6 9h4M16 9h4M6 15h4M16 15h4" stroke="#888"/></svg><svg width="8" height="5"><use href="#dn"/></svg></button><select class="pick ctl flex-fill" aria-label="Typ plików"><option>Wszystkie wspierane pliki</option></select></div>
              <div class="filelist flex-fill"></div>
              <div class="objrow d-flex align-items-end gap-1"><label for="obj" class="pb-1">Lista obiektów</label><select id="obj" class="pick flex-fill"><option></option></select></div>
            </div>
          </div>
          <div class="sbar d-flex flex-column align-items-center"><svg width="10" height="16" viewBox="0 0 10 16"><path d="M0 10h10L5 5z" fill="#444"/></svg><div class="thumb w-100 flex-fill d-flex align-items-center justify-content-center"><svg width="8" height="8" viewBox="0 0 8 8"><path d="M0 .5h8M0 2.500h8M0 4.500h8M0 6.500h8" stroke="#7b858f"/></svg></div><svg width="10" height="42" viewBox="0 0 10 42"><path d="M0 31h10l-5 5z" fill="#444"/></svg></div>
        </div>
      </div>
      <nav class="rail right">
        <button class="on" aria-label="Pliki"><svg width="24" height="22"><use href="#fold"/></svg></button>
        <button aria-label="Biblioteka"><svg class="ic24" viewBox="0 0 24 24"><use href="#fold" width="24" height="22"/><path d="M4 20L19 5" stroke="#135b88" stroke-width="5"/><circle cx="5" cy="19" r="4.500" fill="#1c7fb2" stroke="#0e4468"/><circle cx="19" cy="6" r="4" fill="#135b88"/><circle cx="12" cy="12" r="2" fill="#bfe0ee"/></svg></button>
        <button aria-label="Warstwy"><svg class="ic24"><use href="#lay"/></svg></button>
        <button aria-label="Wizualne"><svg class="ic24" viewBox="0 0 24 24"><use href="#fold" width="24" height="22"/><circle cx="17" cy="15" r="6.500" fill="#e8eef2" stroke="#1b7f6b"/><path d="M10.500 15a6.500 6.500 0 0 0 13 0z" fill="#e8822a"/><path d="M17 8.500a6.500 6.500 0 0 1 6.500 6.500H19z" fill="#3c9f6a"/></svg></button>
        <button aria-label="Atrybuty"><svg class="ic24" viewBox="0 0 24 24"><path d="M0 8q1-4 5-4 1-3 5-3t4 4-5 6q-5 1-9-3z" fill="#2386b2" stroke="#0e557c"/><path d="M3 8q4 2 8-2" stroke="#9fd4ea" fill="none"/><use href="#rgb" x="7" y="14" width="14" height="8"/></svg></button>
      </nav>
    </div>
    <div class="bottabs d-flex flex-shrink-0"><a class="on" href="#">Przeglądarka plików</a><a href="#">Dane wyjściowe</a></div>
  </aside>
</main>

<footer class="status d-flex align-items-center flex-shrink-0">
  <span>Wybierz komendę lub elementy.</span>
  <span class="vbar ms-auto me-2"></span>
  <button class="tool hot me-2" aria-label="Menadżer"><svg class="ic16" viewBox="0 0 16 16"><path d="M1 1h14v14H1z" fill="#e9f1f8" stroke="#2b6fb8" stroke-width="1.500"/><path d="M3 4v9" stroke="#1d4f80" stroke-dasharray="1 1"/><path d="M5.500 3v12" stroke="#2b6fb8" stroke-width=".8"/><path d="M7 5.500h6M10.500 5v8" stroke="#b22" stroke-width="2"/></svg></button>
  <button class="tool hot me-2" aria-label="Ekran"><svg class="ic18" viewBox="0 0 18 18"><path d="M1 2h16v10H1z" fill="#2aa6c8" stroke="#155f7c"/><path d="M2 3h14v4H2z" fill="#7fd6e8"/><path d="M6 12h6v3H6z" fill="#333"/></svg></button>
  <button class="tool w24 me-2" aria-label="Komunikaty"><svg width="14" height="15" viewBox="0 0 14 15"><path d="M.5 1h13v13H.5z" fill="#fff" stroke="#2b6fb8"/><path d="M.5 1h13v3H.5z" fill="#3a86d2"/><path d="M3 6.500h8M3 8.500h8M3 10.500h6" stroke="#9ab"/></svg></button>
  <input type="text" aria-label="Wiersz poleceń">
  <svg width="12" height="12" viewBox="0 0 12 12" class="ms-2 me-1 mt-3"><path d="M8 1h2v2H8zM4 5h2v2H4zM8 5h2v2H8zM0 9h2v2H0zM4 9h2v2H4zM8 9h2v2H8z" fill="#b0b6bc"/></svg>
</footer>

<script src="https://cdn.jsdelivr.net/npm/bootstrap@5.3.0/dist/js/bootstrap.bundle.min.js"></script>
<script>
/* toolbars */
const btn = (id, w) => `<button class="tool ${w}" aria-label="${id}"><svg class="ic16"><use href="#${id}"/></svg></button>`;
const bar = '<span class="vbar"></span>';
const link = d => `<button class="tool w25" aria-label="Łącze"><svg class="ic16" viewBox="0 0 16 16">${d}</svg></button>`;
document.getElementById('midtools').innerHTML =
  link('<path d="M1 3h5M9 3h5M2 8h11" stroke="#9a9da0" stroke-width="1.600"/><path d="M8 10h6v5H8z" fill="#aaadb0"/>') +
  link('<circle cx="7" cy="5" r="4.500" fill="#c2c5c8" stroke="#a2a5a8"/><path d="M1 10h13" stroke="#8e9194" stroke-width="2"/><path d="M8 10h6v5H8z" fill="#aaadb0"/>') + bar +
  ['sel','sel','selr','selg','arr2','lst','bxs','bxg','bxw'].map(i => btn(i, 'w24')).join('') + bar + ['gc','gn','sqd'].map(i => btn(i, 'w24')).join('');
document.getElementById('graytools').innerHTML = ['g1','g2','g3','g4','g5','g6','g7','g8','g9b','g9','g10','g5','g11','g11'].map(i => btn(i, 'w24')).join('');

const car = '<button class="tool w14" aria-label="Więcej"><svg width="8" height="5"><use href="#dn"/></svg></button>';
const vi = (inner, c) => `<button class="tool w25" aria-label="Widok"><svg class="${c === 0 ? 'ic16' : 'ic18'}" viewBox="0 0 16 16">${inner}</svg></button>${c ? car : ''}`;
document.getElementById('vtools').innerHTML =
  vi('<path d="M7 5V2h7v12H7v-3" fill="none" stroke="#8f9397" stroke-width="1.300"/><path d="M11 8H3M5 5L1 8l4 3" stroke="#8f9397" stroke-width="1.300" fill="none"/>') +
  vi('<circle cx="4" cy="3" r="2.500" fill="#6fb3d4" stroke="#2a6c95"/><path d="M2 6h4v7H2z" fill="#3d8fb5"/><path d="M5 10l10-2-3 7-9 0z" fill="#a9d86a" stroke="#4f8f2a"/><path d="M7 12h7M9 9.500l-2 5" stroke="#fff"/>', 1) +
  vi('<path d="M12 3l2 2-5 6-3-2z" fill="#f2c36c" stroke="#8a5a1a" stroke-width=".6"/><path d="M6 9l3 2-2 3H4z" fill="#d33a3a"/>') +
  vi('<use href="#cubey"/>') + vi('<use href="#cube"/>', 1) + vi('<use href="#cubeo"/>', 1) +
  vi('<path d="M8 1l6 3 1 6-6 5-7-2-1-7z" fill="#f6a81f" stroke="#8a5210"/><path d="M8 1l-1 7 8 2M7 8L1 6M7 8l2 7M7 8l7-4M7 8l-5 5" stroke="#8a5210" stroke-width=".8" fill="none"/>', 1) +
  vi('<path d="M0 0h16v16H0z" fill="#3d9cc5"/><circle cx="8" cy="8" r="6.500" fill="#dff1f8"/><path d="M5 4h6v8H5z" fill="#ffcf3a" stroke="#a8801a"/>', 1) +
  vi('<circle cx="8" cy="8" r="5" fill="none" stroke="#c9303a"/><path d="M8 1v14M1 8h14" stroke="#2c5f86"/><circle cx="8" cy="8" r="1.800" fill="#c9303a"/>', 1) +
  vi('<path d="M1.500 1.500h13v13h-13z" fill="#f2fafd" stroke="#6fb0cc"/><path d="M4 9v3h3M9 4h3v3" stroke="#2c7fa8" fill="none" stroke-dasharray="1.500 1"/>', 0) +
  vi('<path d="M2 1v11M14 1v11" stroke="#2c7fa8" stroke-width="1.500"/><path d="M2 6h12" stroke="#2c5f86"/><path d="M1 14.500h14" stroke="#c9303a" stroke-width="1.600"/>', 1) +
  vi('<path d="M1 1h14v10H1z" fill="#6c7680" stroke="#555"/><path d="M2 3h12M2 5h12M2 7h12" stroke="#98a6b4" stroke-width=".8"/><path d="M5 12h6v3H5z" fill="#999"/>', 1) +
  vi('<path d="M0 5.500h16v5H0z" fill="#000"/>', 0) + vi('<path d="M1 1h14v14H1z" fill="#bfeaf5" stroke="#222" stroke-width="1.200"/>', 0) +
  vi('<use href="#lay"/>', 1);

/* trees */
const ic = (id, w, h) => `<svg width="${w}" height="${h}" class="me-1"><use href="#${id}"/></svg>`;
const ch = id => `<svg class="chev"><use href="#${id}"/></svg>`;
const F = '<span class="fixmark">(F)</span>';
const parts = ['F|Installation plate','Breaker','MMYK-33-33-2-M_','F|MMYK-33-33-2-M_',...Array(3).fill('MMYK-33-33-2-M_'),...Array(7).fill('Electricity meter'),'F|Line row','F|Line row','F|Amphenol connector','F|S203-D062P',...Array(10).fill('S203-D062P')];
let n = 0;
const chk = (c, html) => { n++; return `<input class="tick ${c}" type="checkbox" checked id="n${n}"><label class="d-flex align-items-center" for="n${n}">${html}</label>`; };
const row = (d, html) => `<div class="trow d-flex align-items-center ${d}">${html}</div>`;
document.getElementById('tree').innerHTML =
  row('d1', ch('cd') + ic('orge',16,14) + '<span class="root-name">Złożenieokablowania001</span>') +
  row('d2', ch('cd') + chk('red', ic('org',16,14) + '(−)Wiring board')) +
  parts.map(p => row('d4', chk('red', ic('cube',15,15) + (p.startsWith('F|') ? F + p.slice(2) : p)))).join('') +
  row('d3', ch('cr') + chk('green', ic('mir',15,14) + 'mirror1')) +
  row('d3', ch('cr') + chk('green', ic('pat',15,15) + 'pattern1( &lt;-X)')) +
  row('d3', ch('cr') + ic('fold',15,13) + 'Więzy') + row('d2', ch('cr') + ic('fold',15,13) + 'Więzy');
document.getElementById('drives').innerHTML = ['Ulubione','Developerka(B:)','(C:)','Support(M:)','Obsluga_handlowa(N:)','Zdjecia_reklamy_grafika(O:)','Wspolne_pliki(Z:)'].map((t, i) =>
  row('', ch('cr') + (i ? ic('fold',16,15) : '<svg width="16" height="15" viewBox="0 0 17 15" class="me-1"><path d="M8 0l2 5h5l-4 3 1 5-4-3-4 3 1-5-4-3h5z" fill="#23a3c6"/><use href="#rgb" x="7" y="10" width="9" height="5"/></svg>') + t)).join('');

/* 3D scene */
const S = [];
const P = (pts, fill, stroke = '#111', w = .8) => S.push(`<polygon points="${pts.map(p => p.map(v => Math.round(v * 10) / 10).join()).join(' ')}" fill="${fill}" stroke="${stroke}" stroke-width="${w}"/>`);
const L = (d, stroke = '#111', w = .8, fill = 'none') => S.push(`<path d="${d}" fill="${fill}" stroke="${stroke}" stroke-width="${w}"/>`);
const blob = (x1, y1, x2, y2, k, h) => {            /* row of cable glands */
  const dx = (x2 - x1) / k, dy = (y2 - y1) / k; let top = '';
  for (let i = 0; i < k; i++) top += `L${x1 + dx * (i + .3)} ${y1 + dy * (i + .3) - h * .75}L${x1 + dx * (i + .55)} ${y1 + dy * (i + .5) - h * .7}L${x1 + dx * (i + .85)} ${y1 + dy * (i + .85) - h * .3}`;
  L(`M${x1} ${y1}${top}L${x2} ${y2 - h * .2}L${x2 - 1} ${y2 + h * .5}L${x2 - dx * .5} ${y2 + h * .55}L${x1 + dx * .7} ${y1 + dy * .5 + h * .4}Z`, '#0000c8', .6, '#0000f5');
};
const duct = (x1, y1, x2, y2, k, h, fill, slot = '#9dbecb') => {   /* slotted wall of a cable duct */
  const dx = (x2 - x1) / k, dy = (y2 - y1) / k;
  P([[x1, y1], [x2, y2], [x2, y2 + h], [x1, y1 + h]], fill);
  for (let i = 0; i < k; i++) {
    const x = x1 + dx * i, y = y1 + dy * i;
    P([[x + dx * .06, y - 1], [x + dx * .86, y + dy * .8 - 1], [x + dx * .86, y + dy * .8 + 3], [x + dx * .06, y + 3]], '#cfcdcb', '#111', .9);
    if (h > 10) P([[x + dx * .66, y + dy * .66 + 5], [x + dx * .88, y + dy * .88 + 5], [x + dx * .86, y + dy * .88 + h - 3], [x + dx * .64, y + dy * .62 + h - 4]], i % 3 == 2 ? '#8f8c8a' : slot, '#111', 1.100);
    L(`M${x + dx * .08} ${y + 5}L${x + dx * .6} ${y + dy * .6 + 5}`, '#111', 1);
  }
};

/* mounting plate */
P([[484,652],[1058,458],[1548,627],[1553,631],[1554,637],[958,846],[482,667],[480,660]], '#7ea2b0');
P([[493,655],[1058,460],[1542,630],[958,831]], '#9dbecb', 'none');
P([[484,653],[958,830],[958,840],[482,662]], '#a3c4d0', 'none');
P([[958,830],[1546,629],[1553,634],[958,840]], '#a3c4d0', 'none');
L('M486 652L1058 458L1546 627M494 655L958 830L1545 628M481 661L958 839L1554 634M483 666L958 843L1554 637M958 830V846');
L('M494 653q-12 0-13 9M1545 627q9 0 9 8');
[[538,657],[947,812],[1498,623]].forEach(([x, y]) => S.push(`<ellipse cx="${x}" cy="${y}" rx="6.500" ry="2.700" fill="#7d8a8f" stroke="#111"/>`));

/* rear-left duct and floor of the frame */
P([[637,600],[930,492],[1195,695],[1065,740],[1010,715]], '#a9a7a5', '#333', .5);
duct(635,586,927,488,24,20,'#c0bebc','#fff');
duct(668,590,860,522,14,22,'#b2b0ae','#e8e8e8');

/* breaker */
P([[1006,450],[1028,435],[1081,417],[1179,447],[1176,486],[1100,533],[1080,528],[1002,490]], '#5a5858');
P([[1081,417],[1179,448],[1179,470],[1082,500],[1028,437]], '#8b8888');
P([[1082,478],[1178,449],[1177,468],[1080,499]], '#8c8a89');
P([[1080,499],[1177,468],[1174,507],[1107,532],[1078,528]], '#575555');
L('M1112 490L1108 530M1142 480v36M1122 486l11-3v9l-11 3z');
[[1100,418],[1123,427],[1149,437],[1169,446]].forEach(([x, y]) => P([[x - 6,y + 2],[x,y - 2],[x + 9,y],[x + 8,y + 11],[x - 2,y + 8]], '#999696'));
P([[1030,435],[1081,417],[1156,444],[1106,464]], '#777575');
P([[1040,432],[1063,424],[1078,430],[1056,440]], '#2a2a2a');
P([[1092,452],[1120,440],[1146,447],[1112,462]], '#222');
L('M1096 451l22-9M1102 453l24-9M1108 456l26-10M1104 446l20 8M1114 443l20 7', '#8a8888', .6);
P([[1070,444],[1098,433],[1120,438],[1088,450]], '#858383');
P([[1078,426],[1094,428],[1094,441],[1078,438]], '#1a1a1a');
P([[1028,437],[1106,464],[1104,478],[1026,450]], '#8f8c8b');
L('M1028 441L1106 468M1029 445L1105 472'); S.push('<circle cx="1056" cy="442" r="2" fill="#d22"/><circle cx="1076" cy="424" r="2" fill="#d22"/>');
for (let i = 0; i < 4; i++) { const x = 1006 + i * 23, y = 449 + i * 9; P([[x,y],[x + 15,y - 4],[x + 20,y + 2],[x + 18,y + 42],[x - 3,y + 36]], '#838180'); P([[x - 1,y + 20],[x + 19,y + 24],[x + 17,y + 52],[x - 3,y + 40]], '#4a4848'); L(`M${x + 6} ${y}v36M${x + 12} ${y - 2}v44M${x + 16} ${y}v30`, '#111', 1); S.push(`<ellipse cx="${x + 28}" cy="${y + 4}" rx="4" ry="2" fill="#bbb" stroke="#111"/><circle cx="${x + 10}" cy="${y + 45}" r="3.500" fill="#a5822c" stroke="#111"/><path d="M${x + 6} ${y + 47}l9 5" stroke="#ddd"/>`); }
blob(1178,480,1191,482,1,10);

/* electricity meter; (x, y) is the offset of the housing */
const meter = (x, y) => {
  const q = pts => pts.map(([a, b]) => [a + x, b + y]);
  P(q([[1318,575],[1388,602],[1387,657],[1316,628]]), '#0560c4');
  P(q([[1388,602],[1478,572],[1472,628],[1387,657]]), '#0552ab');
  P(q([[1384,608],[1391,606],[1391,655],[1384,657]]), '#2b86ea', '#0a3f86', .5);
  P(q([[1333,564],[1397,545],[1403,544],[1410,546],[1478,571],[1477,576],[1403,602],[1388,602],[1320,572]]), '#0a6fdf');
  P(q([[1351,573],[1405,549],[1463,572],[1461,576],[1412,594]]), '#0863cc');
  P(q([[1357,574],[1405,556],[1455,574],[1411,591]]), '#0b6cda', '#0a3f86');
  L(`M${1361 + x} ${572 + y}q30 4 50 19q-28 -2 -50 -19`, '#222', .7, '#777f85');
  P(q([[1400,560],[1407,559],[1448,575],[1440,578]]), '#55504c', '#222', .6);
  for (let i = 0; i < 5; i++) S.push(`<ellipse cx="${1408 + i * 8 + x}" cy="${563 + i * 3 + y}" rx="2.600" ry="1.800" fill="${i < 2 ? '#8f1c26' : i == 2 ? '#ddd' : '#666'}" stroke="#111" stroke-width="1.200"/>`);
  P(q([[1318,573],[1322,569],[1331,567],[1406,593],[1403,599],[1388,602]]), '#d6d6d6');
  P(q([[1318,573],[1388,602],[1405,597],[1405,606],[1388,612],[1318,583]]), '#76736f');
  L(`M${1388 + x} ${602 + y}v10`); S.push(`<ellipse cx="${1361 + x}" cy="${586 + y}" rx="4.500" ry="2.500" fill="#999" stroke="#111"/>`);
  blob(1314 + x, 614 + y, 1384 + x, 635 + y, 5, 14);
};
meter(-186,-71); meter(-93,-36); meter(0,0);
duct(978,489,1355,632,25,15,'#b9b7b5');
blob(1338,640,1348,640,1,12);
meter(-461,-60); meter(-367,-22); meter(-273,12); meter(-180,47);

/* central duct */
P([[799,556],[820,545],[1200,690],[1160,710]], '#c4c2c0', 'none');
duct(819,543,1200,690,25,12,'#c4c2c0','#1b6bbd');
duct(795,552,1180,702,25,13,'#bbb9b7','#ddd');
[[785,546],[842,562],[1012,628],[1190,702]].forEach(([x, y]) => blob(x - 5, y, x + 5, y, 1, 8));

/* circuit breakers */
for (let i = 0; i < 21; i++) {
  const x = 735 + i * 15.4, y = 578 + i * 5.85;
  P([[x - 8,y + 6],[x + 8,y + 12],[x + 6,y + 50],[x - 10,y + 34]], '#b5b3b1');
  L(`M${x - 5} ${y + 10}l5 2l-1 8l3 1l-1 9l-6-2l1-9l-3-1zM${x + 4} ${y + 14}v22M${x + 6} ${y + 14}v18M${x - 7} ${y + 12}v18M${x - 3} ${y + 30}v8`, '#111', 1.200);
  P([[x - 6,y - 2],[x + 2,y - 7],[x + 17,y - 2],[x + 9,y + 7],[x - 7,y + 3]], '#cccac9');
  S.push(`<ellipse cx="${x + 3}" cy="${y}" rx="4.200" ry="2.600" fill="#e4e4e4" stroke="#111"/>`);
  P([[x + 4,y - 17],[x + 20,y - 11],[x + 18,y + 4],[x + 2,y - 3]], '#b6b4b3', '#111', 1);
  P([[x + 4,y - 17],[x + 12,y - 22],[x + 28,y - 16],[x + 20,y - 11]], '#d0cfce');
  L(`M${x + 9} ${y - 18}l8 3M${x + 12} ${y - 20}l8 3`, '#222', 1);
}
P([[1064,694],[1064,682],[1090,672],[1104,680],[1102,718],[1046,737],[1048,702]], '#a9a8a6');
L('M1058 706h6v5h-6zM1075 706h2v4h-2zM1092 704h2v6h-2zM1070 684l8-3v6l-8 3zM1085 676h6v10h-6M1056 720v6M1070 725v4', '#111', 1.400);
P([[751,546],[757,544],[1086,670],[1084,680],[1074,684],[750,553]], '#050505');

/* terminal blocks */
blob(1006,724,1046,735,4,14); blob(1010,749,1023,753,1,13);
P([[636,588],[985,717],[985,752],[630,616]], '#3f3a37', 'none');
for (let i = 0; i < 46; i++) { const x = 635 + i * 7.73, y = 586 + i * 2.9; P([[x,y],[x + 22,y - 8],[x + 22,y + 13],[x - 1,y + 20]], '#5f5c59'); L(`M${x} ${y}l22-8l3 1l-21 8z`, '#111', .6, '#75726f'); }
for (let i = 0; i < 46; i++) { const x = 626 + i * 7.73, y = 614 + i * 2.9; P([[x,y],[x + 10,y - 4],[x + 11,y + 13],[x + 5,y + 18],[x - 1,y + 14]], i % 15 == 0 ? '#7a7671' : '#5a5754'); S.push(`<circle cx="${x + 12}" cy="${y - 6}" r="1" fill="#a0502f" stroke="#200" stroke-width=".8"/>`); }
P([[983,718],[1005,711],[1004,732],[984,738]], '#625f5c'); S.push('<circle cx="994" cy="724" r="2.500" fill="none" stroke="#111"/>');
P([[979,746],[1012,735],[1012,757],[1000,763],[982,767]], '#5a5856');
L('M985 762l38 14l6-3l-35-14M990 766l30 12', '#222', 1.200);
blob(618,627,699,658,9,8); blob(735,671,817,702,9,8); blob(853,715,935,747,9,8);

/* front-left duct */
duct(594,621,970,763,25,8,'#c4c2c0');
P([[949,798],[953,771],[972,763],[970,791]], '#cfcdcc');
duct(574,629,952,772,25,28,'#b0aeac');
P([[949,799],[970,791],[968,786],[951,791]], '#e2e1e0');
blob(955,774,966,774,1,16); blob(614,638,622,640,1,7); blob(784,704,792,706,1,7);

/* front-right duct */
duct(1042,741,1337,640,24,22,'#c4c2c0','#fff');
P([[1038,742],[1066,755],[1065,780],[1037,770]], '#b9b7b5');
P([[1041,768],[1063,760],[1065,778]], '#e2e1e0');
blob(1056,749,1066,751,1,14);
duct(1066,754,1357,653,25,28,'#aaa8a6','#cfcdcb');
blob(1318,656,1328,658,1,11);

/* datum axes over the model */
L('M1037 500L1022 640M1028 566l48-16v23M1028 566l64 25l-6 50M1020 641l66 36M1020 641l62-21', '#b5713a', 1);
L('M1031 560L1022 620', '#6b58d8', 1.600);
P([[1032,528],[1036,543],[1026,543]], '#4a45e8', '#3a35c8'); P([[1036,492],[1039,507],[1033,507]], '#f5a81c', '#b9741a');
L('M1035 471h8l-8 10h8', '#b5713a', 1.200);

/* orientation triad */
L('M548 937L556 878', '#0a0af0', 2); P([[557,866],[559,880],[551,880]], '#3a36d8', '#1a16b8');
L('M548 937L585 924', '#18b018', 1.600); P([[593,921],[584,919],[584,927]], '#2a5a3a', '#18a018'); S.push('<circle cx="585" cy="924" r="3" fill="#18b018"/>');
L('M548 937L598 956', '#f01010', 1.800); P([[608,959],[597,951],[594,958]], '#e02020', '#b01010');
S.push('<g font-family="Open Sans, sans-serif" font-size="15"><text x="552" y="863" fill="#1414f0">Z</text><text x="595" y="926" fill="#18b018">Y</text><text x="611" y="970" fill="#f01010">X</text></g>');
L('M756.500 990.500v16l4-4l3 6l3-1l-3-6h5z', '#222', 1, '#fff');
document.getElementById('scene').innerHTML = S.join('');
</script>
</body>
</html>
